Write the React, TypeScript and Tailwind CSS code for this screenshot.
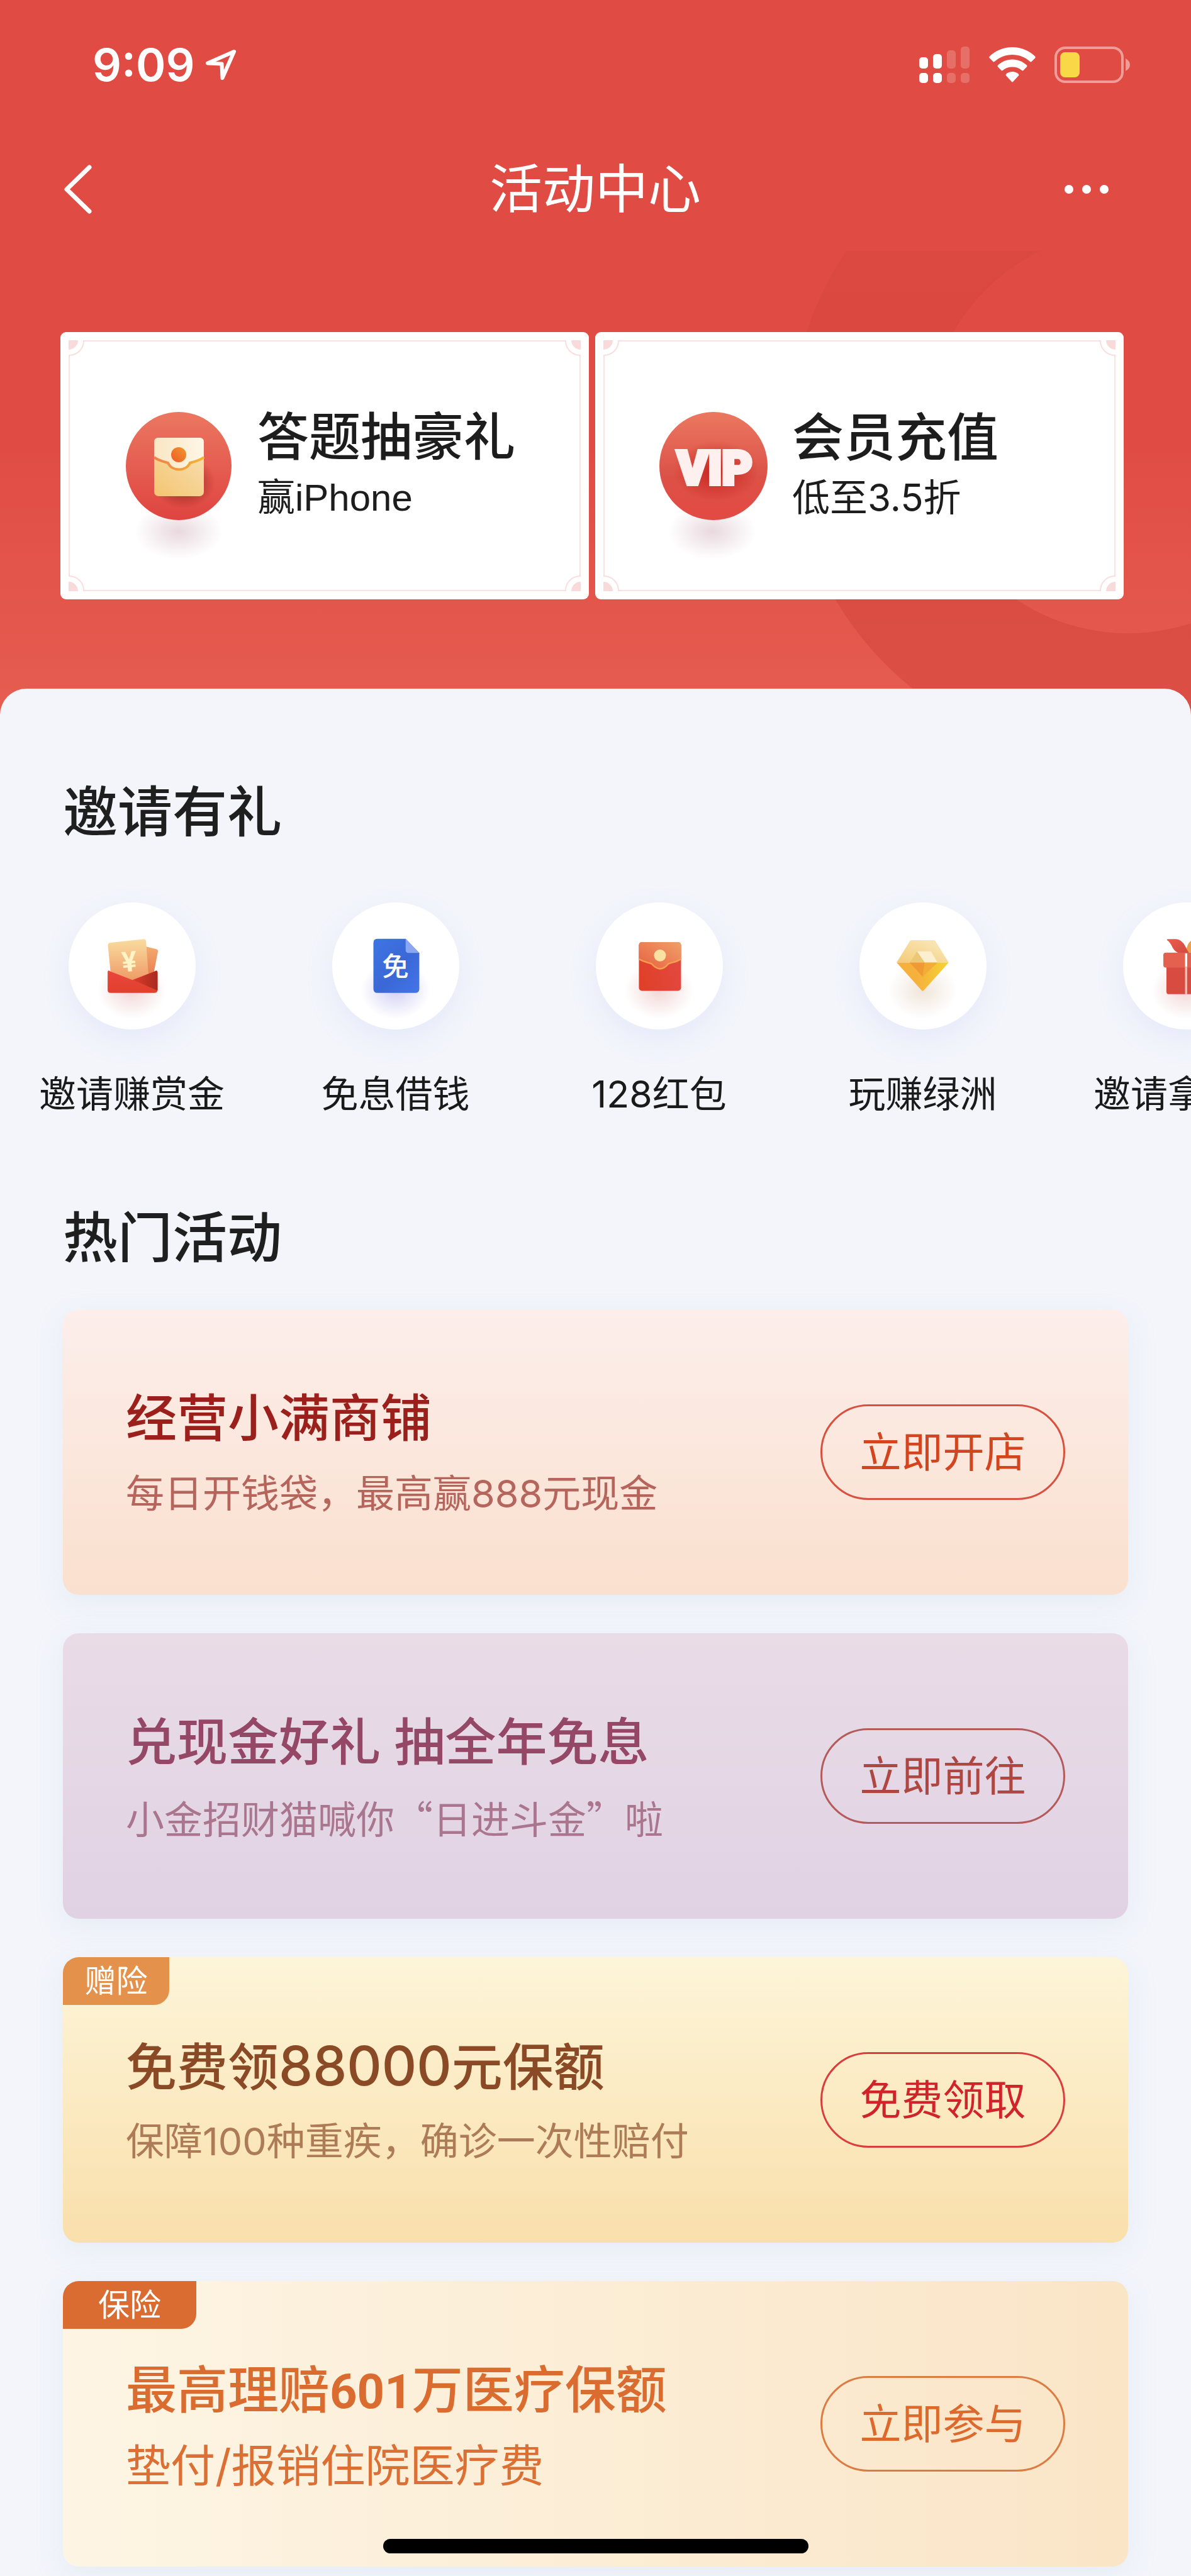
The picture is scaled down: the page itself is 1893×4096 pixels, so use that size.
import React from "react";

const sans = "font-['Inter','Noto_Sans_CJK_SC',sans-serif]";

function StatusBar() {
  return (
    <div className="flex h-[206px] items-center justify-between pl-[147px] pr-[97px] text-white">
      <div className="flex items-center gap-[16px]">
        <span className="text-[72px] font-semibold leading-[80px]">9:09</span>
        <svg className="h-[50px] w-[50px]" viewBox="0 0 50 50" fill="none" stroke="currentColor" strokeWidth="6" strokeLinejoin="round" aria-label="定位">
          <path d="M46 4 L4 22.500 L26.500 23.500 L27.500 46 Z" />
        </svg>
      </div>
      <div className="flex items-center">
        <svg className="h-[58px] w-[80px]" viewBox="0 0 80 58" fill="currentColor" aria-label="信号">
          <rect x="0" y="17" width="14" height="18" rx="5" />
          <rect x="22" y="12" width="14" height="23" rx="5" />
          <rect x="44" y="6" width="14" height="29" rx="5" opacity=".2" />
          <rect x="66" y="0" width="14" height="35" rx="5" opacity=".2" />
          <rect x="0" y="42" width="14" height="16" rx="5" />
          <rect x="22" y="42" width="14" height="16" rx="5" />
          <rect x="44" y="42" width="14" height="16" rx="5" opacity=".2" />
          <rect x="66" y="42" width="14" height="16" rx="5" opacity=".2" />
        </svg>
        <svg className="ml-[31px] h-[56px] w-[74px]" viewBox="0 0 74 56" fill="currentColor" aria-label="无线网络">
          <path d="M37 0 C51 0 64 5.500 73 14.500 Q74.500 16 73 17.500 L67.500 23 Q66.500 24 65 22.800 C57 15.500 47.500 12 37 12 C26.500 12 17 15.500 9 22.800 Q7.500 24 6.500 23 L1 17.500 Q-.5 16 1 14.500 C10 5.500 23 0 37 0 Z" />
          <path d="M37 19.500 C46 19.500 54 23 60 28.800 Q61.200 30 60 31.300 L54.500 37 Q53.500 38 52 36.800 C48 33.300 42.800 31.500 37 31.500 C31.200 31.500 26 33.300 22 36.800 Q20.500 38 19.500 37 L14 31.300 Q12.800 30 14 28.800 C20 23 28 19.500 37 19.500 Z" />
          <path d="M37 39 C41 39 44.500 40.500 47 43 Q48 44.200 47 45.300 L38 55 Q37 56 36 55 L27 45.300 Q26 44.200 27 43 C29.500 40.500 33 39 37 39 Z" />
        </svg>
        <svg className="ml-[30px] h-[58px] w-[120px]" viewBox="0 0 120 58" fill="none" aria-label="电池">
          <rect x="2" y="2" width="106" height="54" rx="15" stroke="#ef9d98" strokeWidth="4" />
          <path d="M113 19 Q120 23 120 29 Q120 35 113 39 Z" fill="#ef9d98" />
          <rect x="9" y="9" width="31" height="40" rx="8" fill="#f9d848" />
        </svg>
      </div>
    </div>
  );
}

function NavBar() {
  return (
    <nav className="flex h-[188px] items-center justify-between pl-[100px] pr-[131px] pt-[2px] text-white">
      <button type="button" aria-label="返回" className="w-[64px]">
        <svg className="h-[80px] w-[48px]" viewBox="0 0 48 80" fill="none" stroke="currentColor" strokeWidth="7" strokeLinecap="round" strokeLinejoin="round">
          <path d="M42 5 L6 40 L42 75" />
        </svg>
      </button>
      <h1 className="pl-[30px] text-[84px] leading-[100px]">活动中心</h1>
      <button type="button" aria-label="更多" className="flex w-[64px] justify-end">
        <svg className="h-[16px] w-[70px] shrink-0" viewBox="0 0 70 16" fill="currentColor">
          <circle cx="7" cy="8" r="7" />
          <circle cx="35" cy="8" r="7" />
          <circle cx="63" cy="8" r="7" />
        </svg>
      </button>
    </nav>
  );
}

function Corner({ className }: { className: string }) {
  return (
    <svg className={`absolute h-[27px] w-[27px] bg-white ${className}`} viewBox="0 0 27 27" fill="none">
      <path d="M0 0 H15 A15 15 0 0 1 0 15 Z" fill="#f9dada" />
      <path d="M27 1 H24 A23 23 0 0 1 1 24 V27" stroke="#fadede" strokeWidth="2" />
    </svg>
  );
}

function EnvelopeBadge() {
  return (
    <svg className="h-[172px] w-[172px] shrink-0 overflow-visible" viewBox="0 0 172 172">
      <defs>
        <linearGradient id="eb" x1="0" y1="0" x2="0" y2="1"><stop stopColor="#eb7761" /><stop offset="1" stopColor="#df4440" /></linearGradient>
        <linearGradient id="ee" x1=".9" y1="0" x2=".2" y2="1"><stop stopColor="#f8e2b8" /><stop offset="1" stopColor="#f4c777" /></linearGradient>
        <linearGradient id="ef" x1="0" y1="0" x2="1" y2="0"><stop stopColor="#fae6c4" /><stop offset="1" stopColor="#fdf6e6" /></linearGradient>
        <linearGradient id="eo" x1="1" y1="0" x2="0" y2="1"><stop stopColor="#f0972e" /><stop offset="1" stopColor="#ee5c24" /></linearGradient>
        <linearGradient id="el" x1="0" y1="0" x2="1" y2="0"><stop stopColor="#ef7f4a" /><stop offset="1" stopColor="#f3b62e" /></linearGradient>
        <radialGradient id="es"><stop stopColor="#dcc4cc" stopOpacity=".65" /><stop offset="1" stopColor="#dcc4cc" stopOpacity="0" /></radialGradient>
        <radialGradient id="ed"><stop offset=".4" stopColor="#962820" stopOpacity=".65" /><stop offset="1" stopColor="#962820" stopOpacity="0" /></radialGradient>
      </defs>
      <ellipse cx="86" cy="190" rx="70" ry="44" fill="url(#es)" />
      <ellipse cx="86" cy="86" rx="84" ry="86" fill="url(#eb)" />
      <ellipse cx="94" cy="112" rx="50" ry="42" fill="url(#ed)" />
      <rect x="47" y="41" width="79" height="93" rx="7" fill="url(#ee)" />
      <path d="M47 48 Q47 41 54 41 H119 Q126 41 126 48 V72 C120 77 112 79 104 81 C98 95 75 95 69 81 C61 79 53 77 47 72 Z" fill="url(#ef)" />
      <path d="M47 72 C53 77 61 79 69 81 C75 95 98 95 104 81 C112 79 120 77 126 72" fill="none" stroke="url(#el)" strokeWidth="4" />
      <circle cx="86" cy="68" r="12" fill="url(#eo)" />
    </svg>
  );
}

function VipBadge() {
  return (
    <svg className="h-[172px] w-[172px] shrink-0 overflow-visible" viewBox="0 0 172 172">
      <defs>
        <linearGradient id="vb" x1="0" y1="0" x2="0" y2="1"><stop stopColor="#eb7861" /><stop offset=".6" stopColor="#dc5147" /><stop offset="1" stopColor="#e34a44" /></linearGradient>
        <radialGradient id="vs"><stop stopColor="#dcc4cc" stopOpacity=".65" /><stop offset="1" stopColor="#dcc4cc" stopOpacity="0" /></radialGradient>
        <radialGradient id="vd"><stop stopColor="#c01a16" stopOpacity=".8" /><stop offset="1" stopColor="#c01a16" stopOpacity="0" /></radialGradient>
      </defs>
      <ellipse cx="84" cy="190" rx="70" ry="44" fill="url(#vs)" />
      <circle cx="86" cy="86" r="86" fill="url(#vb)" />
      <ellipse cx="90" cy="94" rx="68" ry="48" fill="url(#vd)" />
      <text x="88" y="115" textAnchor="middle" fontSize="74" strokeWidth="6" className="fill-[#fdf0ee] stroke-[#fdf0ee] font-['Roboto',sans-serif] font-black">VIP</text>
    </svg>
  );
}

function TicketCard({ icon, title, sub }: { icon: React.ReactNode; title: string; sub: React.ReactNode }) {
  return (
    <a href="#" className="relative flex h-[425px] flex-1 items-center gap-[39px] rounded-[9px] bg-white pl-[102px]">
      <span className="absolute inset-[13px] border-2 border-[#fbe3e3]">
        <Corner className="-left-[2px] -top-[2px]" />
        <Corner className="-right-[2px] -top-[2px] rotate-90" />
        <Corner className="-bottom-[2px] -right-[2px] rotate-180" />
        <Corner className="-bottom-[2px] -left-[2px] -rotate-90" />
      </span>
      <span className="relative shrink-0">{icon}</span>
      <span className="relative flex flex-col gap-[9px] whitespace-nowrap pb-[8px] text-[#1d1d1d]">
        <span className="text-[82px] font-medium leading-[100px]">{title}</span>
        <span className="text-[60px] leading-[72px]">{sub}</span>
      </span>
    </a>
  );
}

function Glow({ id, color }: { id: string; color: string }) {
  return (
    <>
      <defs>
        <radialGradient id={id}><stop stopColor={color} stopOpacity=".34" /><stop offset="1" stopColor={color} stopOpacity="0" /></radialGradient>
      </defs>
      <ellipse cx="102" cy="142" rx="56" ry="46" fill={`url(#${id})`} />
    </>
  );
}

function RewardIcon() {
  return (
    <svg className="h-full w-full" viewBox="0 0 205 205">
      <defs>
        <linearGradient id="ra" x1="0" y1="0" x2="0" y2="1"><stop stopColor="#f9dca0" /><stop offset="1" stopColor="#ee9460" /></linearGradient>
        <linearGradient id="rb" x1="0" y1="0" x2="0" y2="1"><stop stopColor="#f2ab70" /><stop offset="1" stopColor="#ea7b4e" /></linearGradient>
        <linearGradient id="rc" x1="0" y1="0" x2="0" y2="1"><stop stopColor="#e8483e" /><stop offset="1" stopColor="#e23f2b" /></linearGradient>
        <linearGradient id="rd" x1="0" y1="0" x2="1" y2="0"><stop stopColor="#dc3b2b" /><stop offset="1" stopColor="#a82a1f" /></linearGradient>
      </defs>
      <Glow id="rg" color="#d98a86" />
      <path d="M120 70 L141 75 Q145 76 144 80 L137 116 L118 122 Z" fill="url(#rb)" />
      <path d="M67 65 L121 59 Q125 59 125 63 L129 118 L104 132 L68 116 L63.500 69 Q63.500 65.500 67 65 Z" fill="url(#ra)" />
      <path d="M63 113 Q63 108 67 111 L103 125 L139 111 Q143.500 108 143.500 113 V141 Q143.500 146 138 146 H68 Q63 146 63 141 Z" fill="url(#rc)" />
      <path d="M104 125 L139 111 Q143.500 109 143.500 113 V142 Z" fill="url(#rd)" />
      <text x="98" y="111" textAnchor="middle" fontSize="44" transform="rotate(-5 98 96)" className="fill-[#fff3c8] font-['Inter',sans-serif] font-bold">¥</text>
    </svg>
  );
}

function LoanIcon() {
  return (
    <svg className="h-full w-full" viewBox="0 0 205 205">
      <defs>
        <linearGradient id="la" x1="0" y1="0" x2="1" y2="1"><stop stopColor="#3f74e4" /><stop offset=".55" stopColor="#3a68d6" /><stop offset="1" stopColor="#4474e8" /></linearGradient>
      </defs>
      <Glow id="lg" color="#8078e0" />
      <path d="M73 58.500 H118.500 L140.500 81.500 V139 Q140.500 146 134 146 H73 Q66.500 146 66.500 139 V65 Q66.500 58.500 73 58.500 Z" fill="url(#la)" />
      <path d="M118.500 58.500 L140.500 81.500 H123 Q118.500 81.500 118.500 77 Z" fill="#8ba6f2" />
      <text x="102" y="119" textAnchor="middle" fontSize="43" className="fill-white font-['Noto_Sans_CJK_SC',sans-serif] font-medium">免</text>
    </svg>
  );
}

function PacketIcon() {
  return (
    <svg className="h-full w-full" viewBox="0 0 205 205">
      <defs>
        <linearGradient id="pa" x1="0" y1="1" x2="1" y2="0"><stop stopColor="#e86042" /><stop offset="1" stopColor="#efa068" /></linearGradient>
        <linearGradient id="pb" x1="0" y1="1" x2="1" y2=".6"><stop stopColor="#e03f26" /><stop offset="1" stopColor="#e3483f" /></linearGradient>
      </defs>
      <Glow id="pg" color="#d98a86" />
      <rect x="69.500" y="64" width="68" height="78.500" rx="5" fill="url(#pb)" />
      <path d="M69.500 69 Q69.500 64 74.500 64 H132.500 Q137.500 64 137.500 69 V91 C131 96 124 96 117 99 Q104 115 90 99 C83 96 76 96 69.500 91 Z" fill="url(#pa)" />
      <path d="M69.500 91 C76 96 83 96 90 99 Q104 115 117 99 C124 96 131 96 137.500 91" fill="none" stroke="#f2a24c" strokeWidth="2.500" />
      <circle cx="103.500" cy="85.500" r="9.600" fill="#fbe0a4" />
    </svg>
  );
}

function DiamondIcon() {
  return (
    <svg className="h-full w-full" viewBox="0 0 205 205">
      <defs>
        <linearGradient id="da" x1="0" y1="1" x2="1" y2="0"><stop stopColor="#f4cb78" /><stop offset="1" stopColor="#faeac0" /></linearGradient>
        <linearGradient id="db" x1="0" y1="0" x2="1" y2="0"><stop offset=".4" stopColor="#f5b13c" /><stop offset="1" stopColor="#f5d433" /></linearGradient>
      </defs>
      <Glow id="dg" color="#d4b494" />
      <path d="M84 61 H120 Q122 61 123 63 L144 97 H60 L81 63 Q82 61 84 61 Z" fill="url(#da)" />
      <path d="M60 97 H144 L103.500 142 Q102 143.500 100.500 142 Z" fill="url(#db)" />
      <path d="M93 79 L81 97 H105.500 Z" fill="#ebc776" />
      <path d="M93 79 H115.500 L126 97 H105.500 Z" fill="#fcefd0" />
      <path d="M81 97 H105.500 L102 120 Z" fill="#f09a35" />
      <path d="M105.500 97 H126 L102 120 Z" fill="#f2ac38" />
    </svg>
  );
}

function GiftIcon() {
  return (
    <svg className="h-full w-full" viewBox="0 0 205 205">
      <defs>
        <linearGradient id="ga" x1="0" y1="0" x2="1" y2="1"><stop stopColor="#ec5c4c" /><stop offset="1" stopColor="#d04a44" /></linearGradient>
      </defs>
      <Glow id="gg" color="#d98a86" />
      <path d="M102 78 Q103 64 114 59 Q128 55 136 62 Q130 81 106 81 Z" fill="#eda04c" />
      <path d="M72 59 H86 Q95 60 100 70 Q104 78 107 82 H92 Q85 81 80 73 Q76 64 71 61 Q70 59 72 59 Z" fill="url(#ga)" />
      <rect x="70" y="96" width="64" height="52" rx="4" fill="#d84b40" />
      <rect x="65" y="81" width="74" height="24" rx="4" fill="#e4604f" />
      <rect x="100" y="82" width="3.500" height="22" fill="#fff6f2" />
      <rect x="100" y="104" width="3.500" height="44" fill="#f3b8ac" />
    </svg>
  );
}

const invites = [
  { label: "邀请赚赏金", icon: <RewardIcon /> },
  { label: "免息借钱", icon: <LoanIcon /> },
  { label: "128红包", icon: <PacketIcon /> },
  { label: "玩赚绿洲", icon: <DiamondIcon /> },
  { label: "邀请拿好礼", icon: <GiftIcon /> },
];

type Offer = {
  title: React.ReactNode;
  sub: React.ReactNode;
  action: string;
  card: string;
  titleClass: string;
  subClass: string;
  button: string;
  tag?: string;
  tagClass?: string;
};

const offers: Offer[] = [
  {
    title: "经营小满商铺",
    sub: "每日开钱袋，最高赢888元现金",
    action: "立即开店",
    card: "bg-linear-to-b from-[#fceeeb] to-[#fae0ce]",
    titleClass: "text-[#9b1f1a]",
    subClass: "text-[61px] text-[#b5655c]",
    button: "border-[#d9503f] text-[#d2451e]",
  },
  {
    title: "兑现金好礼 抽全年免息",
    sub: <>小金招财猫喊你<span className="font-['Noto_Sans_CJK_SC',sans-serif]">“</span>日进斗金<span className="font-['Noto_Sans_CJK_SC',sans-serif]">”</span>啦</>,
    action: "立即前往",
    card: "bg-linear-to-b from-[#e9dce7] to-[#e0d2e3]",
    titleClass: "text-[#954766]",
    subClass: "text-[61px] text-[#a9758f]",
    button: "border-[#b55a5a] text-[#ae4742]",
  },
  {
    title: <>免费领<span className="text-[86px]">88000</span>元保额</>,
    sub: "保障100种重疾，确诊一次性赔付",
    action: "免费领取",
    card: "bg-linear-to-b from-[#fdf5d9] to-[#f9dfab]",
    titleClass: "text-[#8a4a25]",
    subClass: "text-[61px] text-[#ad7b55]",
    button: "border-[#d93d3d] text-[#d0242b]",
    tag: "赠险",
    tagClass: "w-[169px] bg-[#e4924b]",
  },
  {
    title: <>最高理赔<span className="font-['Roboto',sans-serif] text-[76px] font-bold">601</span>万医疗保额</>,
    sub: "垫付/报销住院医疗费",
    action: "立即参与",
    card: "bg-linear-to-r from-[#fdf5e4] to-[#fae5c7]",
    titleClass: "text-[#db6c30]",
    subClass: "text-[71px] text-[#dc7034]",
    button: "border-[#dd7c42] text-[#db6a2c]",
    tag: "保险",
    tagClass: "w-[212px] bg-[#da6c31]",
  },
];

function OfferCard({ offer }: { offer: Offer }) {
  return (
    <article className={`relative flex h-[454px] items-center justify-between overflow-clip rounded-[25px] px-[100px] shadow-[0_12px_40px_rgba(190,215,230,0.25)] ${offer.card}`}>
      {offer.tag && (
        <span className={`absolute left-0 top-0 flex h-[76px] items-center justify-center rounded-br-[24px] text-[50px] leading-[60px] text-white ${offer.tagClass}`}>{offer.tag}</span>
      )}
      <div className="flex flex-col gap-[30px] whitespace-nowrap pt-[2px]">
        <h3 className={`h-[100px] text-[81px] font-medium leading-[100px] ${offer.titleClass}`}>{offer.title}</h3>
        <p className={`h-[80px] leading-[80px] ${offer.subClass}`}>{offer.sub}</p>
      </div>
      <button type="button" className={`h-[152px] w-[389px] shrink-0 rounded-full border-[3px] text-[66px] leading-[80px] ${offer.button}`}>{offer.action}</button>
    </article>
  );
}

export default function App() {
  return (
    <main lang="zh-CN" className={`relative w-full overflow-hidden bg-[#f3f5fb] ${sans}`}>
      <header className="relative bg-linear-to-b from-[#e04b43] from-60% to-[#e65d50] pb-[184px]">
        <svg className="absolute right-0 top-[399px] h-[738px] w-[618px]" viewBox="1275 399 618 738" aria-hidden="true">
          <defs>
            <linearGradient id="ring" x1="0" y1="0" x2="0" y2="1"><stop stopColor="#c8403a" stopOpacity=".06" /><stop offset=".2" stopColor="#c8403a" stopOpacity=".22" /><stop offset="1" stopColor="#cc3a32" stopOpacity=".42" /></linearGradient>
          </defs>
          <path fillRule="evenodd" fill="url(#ring)" d="M1256 690 a519 519 0 1 0 1038 0 a519 519 0 1 0 -1038 0 Z M1473 687 a320 320 0 1 0 640 0 a320 320 0 1 0 -640 0 Z" />
        </svg>
        <div className="relative">
          <StatusBar />
          <NavBar />
          <div className="flex gap-[10px] pl-[96px] pr-[107px] pt-[134px]">
            <TicketCard icon={<EnvelopeBadge />} title="答题抽豪礼" sub={<>赢<span className="font-['Liberation_Sans',sans-serif]">iPhone</span></>} />
            <TicketCard icon={<VipBadge />} title="会员充值" sub="低至3.5折" />
          </div>
        </div>
      </header>

      <div className="relative -mt-[42px] rounded-t-[42px] bg-[#f3f5fb] pb-[15px] pt-[147px]">
        <section>
          <h2 className="pl-[100px] text-[87px] font-medium leading-[100px] text-[#1f1f1f]">邀请有礼</h2>
          <div className="mt-[93px] flex">
            {invites.map((item) => (
              <a key={item.label} href="#" className="flex w-[419px] shrink-0 flex-col items-center gap-[67px]">
                <span className="h-[202px] w-[202px] rounded-full bg-white shadow-[0_16px_36px_rgba(205,215,245,0.35)]">{item.icon}</span>
                <span className="whitespace-nowrap text-[59px] leading-[72px] text-[#1a1a1a]">{item.label}</span>
              </a>
            ))}
          </div>
        </section>
        <section className="mt-[143px]">
          <h2 className="pl-[100px] text-[87px] font-medium leading-[100px] text-[#1f1f1f]">热门活动</h2>
          <div className="mt-[63px] flex flex-col gap-[61px] px-[100px]">
            {offers.map((offer) => (
              <OfferCard key={offer.action} offer={offer} />
            ))}
          </div>
        </section>
      </div>
      <div className="absolute bottom-[36px] left-1/2 h-[23px] w-[676px] -translate-x-1/2 rounded-full bg-black" />
    </main>
  );
}
